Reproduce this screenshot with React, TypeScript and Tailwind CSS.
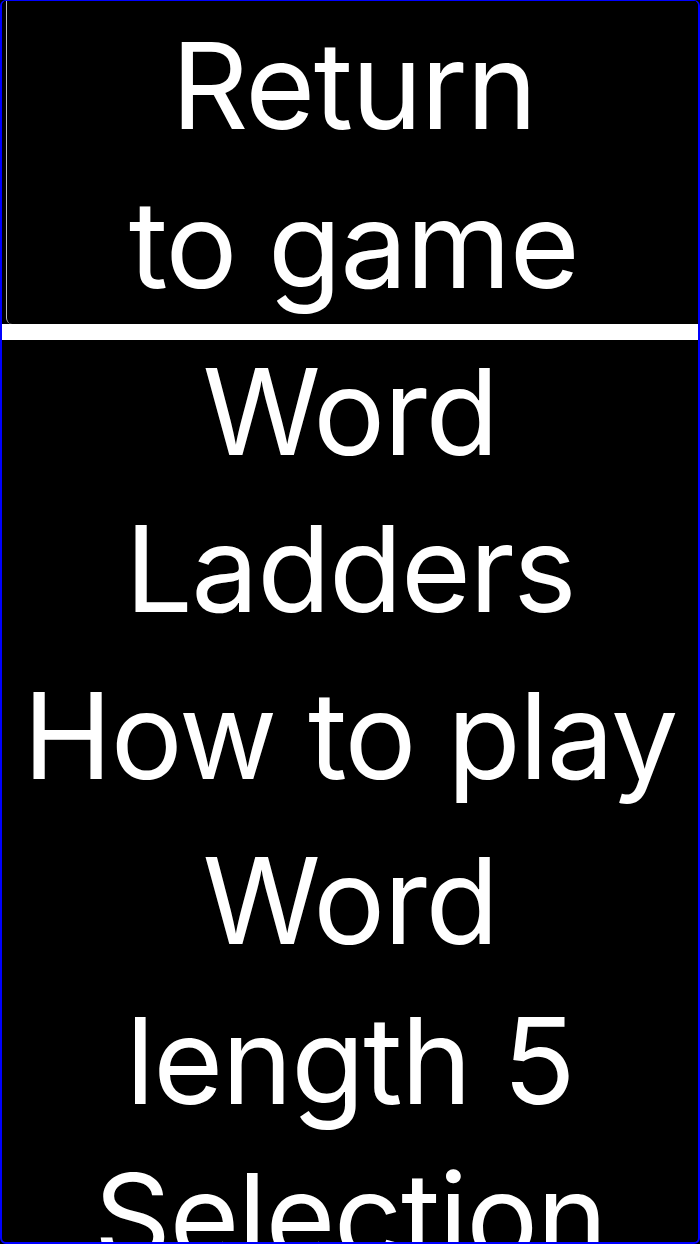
const settingsRows = [
  { label: "How to play", gap: "mt-[9px]" },
  { label: "Word length 5", gap: "mt-[5px]" },
  { label: "Selection", gap: "-mt-[4px]" },
];

export default function App() {
  return (
    <div className="h-[1244px] overflow-hidden bg-black font-['Inter',sans-serif] text-white">
      <div className="h-full overflow-hidden rounded-[6px] border-2 border-t border-[#0000ff] bg-black">
        <button className="-ml-[2px] -mt-[1px] block w-[calc(100%+4px)] border-b-[16px] border-white bg-black pl-[6px] text-center">
          <div className="rounded-bl-[6px] border-l border-[#bbbbbb] pt-[6px] text-[120px] leading-[159px] tracking-[-1.5px]">
            Return
            <br />
            to game
          </div>
        </button>
        <div className="-mt-[7px] px-[20px] text-center text-[120px] tracking-[-1.5px]">
          <h1 className="font-normal leading-[157px]">Word Ladders</h1>
          {settingsRows.map((row) => (
            <p key={row.label} className={`${row.gap} leading-[160px]`}>
              {row.label}
            </p>
          ))}
        </div>
      </div>
    </div>
  );
}
